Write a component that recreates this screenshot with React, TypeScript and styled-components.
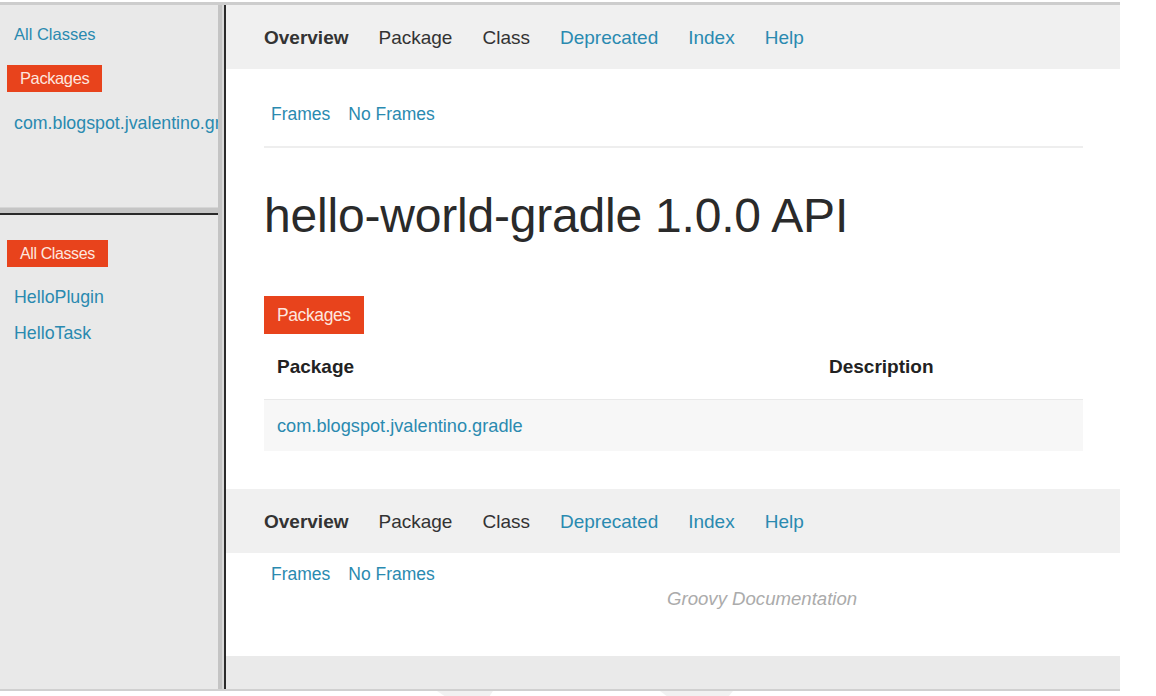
import React from "react";
import styled, { createGlobalStyle } from "styled-components";

const GlobalStyle = createGlobalStyle`
  html, body { margin: 0; padding: 0; background: #fff; }
  body {
    font-family: "Liberation Sans", Arial, Helvetica, sans-serif;
    color: #333;
    -webkit-font-smoothing: antialiased;
  }
  * { box-sizing: border-box; }
`;

const LINK = "#2a8ab0";
const ACCENT = "#e8431c";

const Page = styled.div`
  width: 1156px;
  height: 696px;
  padding-top: 2px;
  overflow: hidden;
`;

const Window = styled.div`
  width: 1120px;
  height: 689px;
  display: grid;
  grid-template-columns: 218px 8px 1fr;
  border-top: 3px solid #cdcdcd;
  border-bottom: 2px solid #d0d0d0;
`;

const LeftColumn = styled.div`
  display: flex;
  flex-direction: column;
  background: #e9e9e9;
  min-width: 0;
`;

const LeftPane = styled.div<{ $height?: number; $top: number }>`
  ${(p) => (p.$height ? `height: ${p.$height}px;` : "flex: 1;")}
  padding: ${(p) => p.$top}px 0 0 7px;
  display: flex;
  flex-direction: column;
  align-items: flex-start;
  overflow: hidden;
  white-space: nowrap;
`;

const HSplit = styled.div`
  height: 8px;
  background: linear-gradient(
    to bottom,
    #d6d6d6 0 1px,
    #c5c5c5 1px 6px,
    #2a2a2a 6px 8px
  );
`;

const VSplit = styled.div`
  background: linear-gradient(
    to right,
    #c4c4c4 0 4px,
    #dadada 4px 6px,
    #2b2b2b 6px 8px
  );
`;

const SideLink = styled.a<{ $size?: number; $gap?: number }>`
  display: block;
  margin: ${(p) => p.$gap ?? 0}px 0 0 7px;
  font-size: ${(p) => p.$size ?? 17.8}px;
  line-height: 20px;
  color: ${LINK};
  text-decoration: none;
`;

const Badge = styled.span<{ $h: number; $size: number; $gap?: number }>`
  display: inline-block;
  margin-top: ${(p) => p.$gap ?? 0}px;
  height: ${(p) => p.$h}px;
  line-height: ${(p) => p.$h}px;
  padding: 0 13px;
  background: ${ACCENT};
  color: #fde6df;
  font-size: ${(p) => p.$size}px;
  letter-spacing: -0.4px;
  white-space: nowrap;
`;

const RightFrame = styled.div`
  display: flex;
  flex-direction: column;
  background: #fff;
  min-width: 0;
`;

const NavBar = styled.ul<{ $gap?: number }>`
  list-style: none;
  margin: ${(p) => p.$gap ?? 0}px 0 0;
  height: 64px;
  padding: 2px 0 0 38px;
  display: flex;
  align-items: center;
  gap: 30px;
  background: #f0f0f0;
`;

const NavItem = styled.li<{ $link?: boolean; $bold?: boolean }>`
  font-size: 19px;
  font-weight: ${(p) => (p.$bold ? 700 : 400)};
  color: ${(p) => (p.$link ? LINK : "#333")};
`;

const Content = styled.div`
  padding: 0 37px 0 38px;
`;

const SubNav = styled.div<{ $top: number; $bottom: number; $rule?: boolean }>`
  display: flex;
  gap: 18px;
  padding: ${(p) => p.$top}px 0 ${(p) => p.$bottom}px 7px;
  border-bottom: ${(p) => (p.$rule ? "2px solid #eeeeee" : "none")};
`;

const SubLink = styled.a`
  font-size: 17.5px;
  line-height: 20px;
  color: ${LINK};
  text-decoration: none;
`;

const Title = styled.h1`
  margin: 41px 0 53px;
  font-size: 48px;
  line-height: 54px;
  font-weight: 400;
  color: #2a2a2a;
  letter-spacing: -0.2px;
`;

const Table = styled.table`
  width: 100%;
  border-collapse: collapse;
`;

const HeadCell = styled.th<{ $w?: number }>`
  ${(p) => (p.$w ? `width: ${p.$w}px;` : "")}
  height: 65px;
  padding: 2px 0 0 13px;
  text-align: left;
  font-size: 19px;
  font-weight: 700;
  color: #222;
  border-bottom: 1px solid #e9e9e9;
`;

const BodyRow = styled.tr`
  background: #f7f7f7;
`;

const BodyCell = styled.td`
  height: 52px;
  padding: 2px 0 0 13px;
  font-size: 18.2px;
  color: ${LINK};
`;

const FooterNote = styled.p`
  margin: 4px 0 0 403px;
  font-size: 18.6px;
  line-height: 22px;
  font-style: italic;
  color: #ababab;
`;

const FooterBar = styled.div`
  margin-top: auto;
  height: 33px;
  background: #eaeaea;
`;

const Watermark = styled.svg`
  display: block;
`;

const navItems: { label: string; link?: boolean; bold?: boolean }[] = [
  { label: "Overview", bold: true },
  { label: "Package" },
  { label: "Class" },
  { label: "Deprecated", link: true },
  { label: "Index", link: true },
  { label: "Help", link: true },
];

const Nav = ({ gap }: { gap?: number }) => (
  <NavBar $gap={gap}>
    {navItems.map((n) => (
      <NavItem key={n.label} $link={n.link} $bold={n.bold}>
        {n.label}
      </NavItem>
    ))}
  </NavBar>
);

export default function App() {
  return (
    <>
      <GlobalStyle />
      <Page>
        <Window>
          <LeftColumn>
            <LeftPane $height={202} $top={19}>
              <SideLink $size={16.5}>All Classes</SideLink>
              <Badge $h={27} $size={16.5} $gap={21}>
                Packages
              </Badge>
              <SideLink $gap={21}>com.blogspot.jvalentino.gradle</SideLink>
            </LeftPane>
            <HSplit />
            <LeftPane $top={25}>
              <Badge $h={27} $size={16}>
                All Classes
              </Badge>
              <SideLink $gap={20}>HelloPlugin</SideLink>
              <SideLink $gap={16}>HelloTask</SideLink>
            </LeftPane>
          </LeftColumn>
          <VSplit />
          <RightFrame>
            <Nav />
            <Content>
              <SubNav $top={35} $bottom={22} $rule>
                <SubLink>Frames</SubLink>
                <SubLink>No Frames</SubLink>
              </SubNav>
              <Title>hello-world-gradle 1.0.0 API</Title>
              <Badge $h={38} $size={17.5}>
                Packages
              </Badge>
              <Table>
                <thead>
                  <tr>
                    <HeadCell $w={552}>Package</HeadCell>
                    <HeadCell>Description</HeadCell>
                  </tr>
                </thead>
                <tbody>
                  <BodyRow>
                    <BodyCell>com.blogspot.jvalentino.gradle</BodyCell>
                    <BodyCell />
                  </BodyRow>
                </tbody>
              </Table>
            </Content>
            <Nav gap={38} />
            <Content>
              <SubNav $top={11} $bottom={0}>
                <SubLink>Frames</SubLink>
                <SubLink>No Frames</SubLink>
              </SubNav>
              <FooterNote>Groovy Documentation</FooterNote>
            </Content>
            <FooterBar />
          </RightFrame>
        </Window>
        <Watermark width="1156" height="6" viewBox="0 0 1156 6">
          <polygon points="437,0 493,0 489,6 446,6" fill="#f1f1f1" />
          <polygon points="660,0 733,0 728,6 668,6" fill="#f1f1f1" />
        </Watermark>
      </Page>
    </>
  );
}
